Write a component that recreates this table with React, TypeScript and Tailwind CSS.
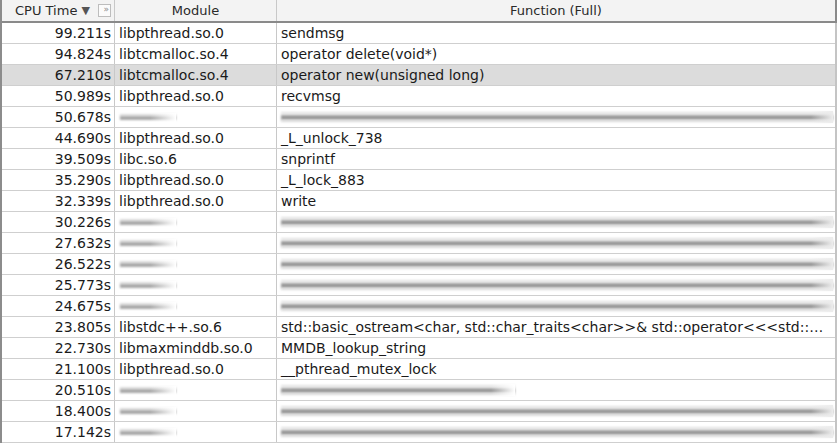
import React from "react";

type Row = {
	time: string;
	module?: string;
	func?: string;
	blurFunc?: "full" | "short";
	selected?: boolean;
};

const ROWS: Row[] = [
	{ time: "99.211s", module: "libpthread.so.0", func: "sendmsg" },
	{ time: "94.824s", module: "libtcmalloc.so.4", func: "operator delete(void*)" },
	{ time: "67.210s", module: "libtcmalloc.so.4", func: "operator new(unsigned long)", selected: true },
	{ time: "50.989s", module: "libpthread.so.0", func: "recvmsg" },
	{ time: "50.678s", blurFunc: "full" },
	{ time: "44.690s", module: "libpthread.so.0", func: "_L_unlock_738" },
	{ time: "39.509s", module: "libc.so.6", func: "snprintf" },
	{ time: "35.290s", module: "libpthread.so.0", func: "_L_lock_883" },
	{ time: "32.339s", module: "libpthread.so.0", func: "write" },
	{ time: "30.226s", blurFunc: "full" },
	{ time: "27.632s", blurFunc: "full" },
	{ time: "26.522s", blurFunc: "full" },
	{ time: "25.773s", blurFunc: "full" },
	{ time: "24.675s", blurFunc: "full" },
	{
		time: "23.805s",
		module: "libstdc++.so.6",
		func: "std::basic_ostream<char, std::char_traits<char>>& std::operator<<<std::…",
	},
	{ time: "22.730s", module: "libmaxminddb.so.0", func: "MMDB_lookup_string" },
	{ time: "21.100s", module: "libpthread.so.0", func: "__pthread_mutex_lock" },
	{ time: "20.510s", blurFunc: "short" },
	{ time: "18.400s", blurFunc: "full" },
	{ time: "17.142s", blurFunc: "full" },
];

const ModuleBlur = () => (
	<div className="relative ml-[1px] h-[9px] w-[56px]">
		<div className="absolute inset-x-0 top-[1px] h-[2px] bg-[#dedede] blur-[1px]" />
		<div className="absolute inset-x-0 top-[3px] h-[4px] bg-[#a8a8a8] blur-[1px]" />
		<div className="absolute inset-y-0 right-0 w-[26px] bg-gradient-to-r from-transparent to-white" />
	</div>
);

const FuncBlur = ({ short }: { short?: boolean }) => (
	<div className={`relative h-[12px] ${short ? "w-[234px]" : "w-full"}`}>
		<div className="absolute inset-x-0 top-[1px] h-[2px] bg-[#e0e0e0] blur-[1px]" />
		<div className="absolute inset-x-0 top-[4px] h-[5px] bg-[#9c9c9c] blur-[1.2px]" />
		<div className="absolute inset-x-0 top-[9px] h-[2px] bg-[#dadada] blur-[1px]" />
		<div
			className={`absolute inset-y-0 right-0 ${short ? "w-[24px]" : "w-[22px]"} bg-gradient-to-r from-transparent ${short ? "to-white" : "to-[#ececec]"}`}
		/>
	</div>
);

export default function App() {
	return (
		<div
			className="h-[443px] w-[837px] overflow-hidden bg-white text-[14px] text-[#1a1a1a]"
			style={{ fontFamily: '"DejaVu Sans", sans-serif' }}
		>
			<div className="border-l-2 border-r-2 border-l-[#8c8c8c] border-r-[#c4c4c4]">
				{/* header */}
				<div className="-mr-[2px] flex h-[23px] border-b-2 border-r-2 border-[#8a8a8a] bg-[#f3f3f3] text-[13px] text-[#2a2a2a]">
					<div className="relative flex w-[113px] shrink-0 items-center border-r border-[#c8c8c8] pl-[13px]">
						<span>CPU Time</span>
						<span className="ml-[4px] text-[11px] leading-none text-[#555]">▼</span>
						<span className="absolute left-[96px] top-[4px] flex h-[13px] w-[13px] items-start justify-end border border-[#bdbdbd] bg-[#fbfbfb] pr-[1px] text-[9px] leading-[8px] text-[#8a8a8a]">
							»
						</span>
					</div>
					<div className="flex w-[162px] shrink-0 items-center justify-center border-r border-[#c8c8c8]">
						Module
					</div>
					<div className="flex flex-1 items-center justify-center">Function (Full)</div>
				</div>
				{/* rows */}
				{ROWS.map((r, i) => (
					<div
						key={i}
						className={`flex h-[21px] border-b border-[#cfcfcf] ${r.selected ? "bg-[#dcdcdc]" : "bg-white"}`}
					>
						<div className="flex w-[113px] shrink-0 items-center justify-end border-r border-[#c8c8c8] pr-[3px]">
							{r.time}
						</div>
						<div className="flex w-[162px] shrink-0 items-center overflow-hidden whitespace-nowrap border-r border-[#c8c8c8] pl-[4px]">
							{r.module ? r.module : <ModuleBlur />}
						</div>
						<div className="flex min-w-0 flex-1 items-center pl-[4px] pr-[2px]">
							{r.func ? (
								<span className="whitespace-nowrap">{r.func}</span>
							) : (
								<FuncBlur short={r.blurFunc === "short"} />
							)}
						</div>
					</div>
				))}
			</div>
		</div>
	);
}
